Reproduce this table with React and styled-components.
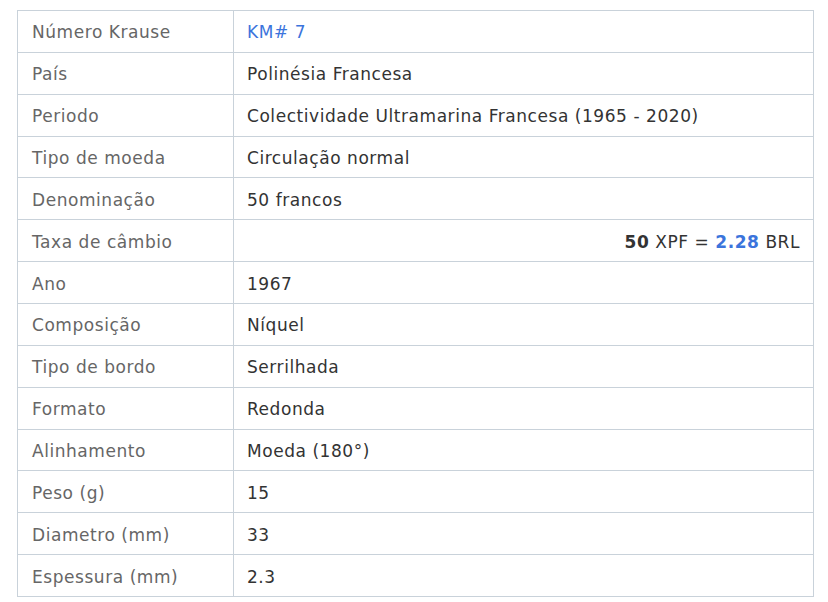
import React from "react";
import styled, { createGlobalStyle } from "styled-components";

const Global = createGlobalStyle`
  html, body { margin: 0; padding: 0; background: #fff; }
  body { font-family: "DejaVu Sans", Verdana, sans-serif; }
`;

const Wrap = styled.div`
  padding: 10px 15px 0 17px;
`;

const Table = styled.table`
  width: 797px;
  border-collapse: collapse;
  table-layout: fixed;
  font-size: 17px;
  letter-spacing: 0.55px;
  border: 1px solid #c9d2da;
`;

const Row = styled.tr`
  height: 41.86px;
`;

const Label = styled.td`
  width: 187px;
  padding: 2px 14px 0;
  color: #666;
  border: 1px solid #c9d2da;
  vertical-align: middle;
`;

const Value = styled.td`
  padding: 2px 13px 0;
  color: #333;
  border: 1px solid #c9d2da;
  vertical-align: middle;
  text-align: ${(p) => (p.$right ? "right" : "left")};
`;

const Link = styled.a`
  color: #3b74dc;
  text-decoration: none;
`;

const Strong = styled.b`
  color: ${(p) => (p.$blue ? "#3b74dc" : "#333")};
`;

const rows = [
  ["Número Krause", <Link href="#">KM# 7</Link>],
  ["País", "Polinésia Francesa"],
  ["Periodo", "Colectividade Ultramarina Francesa (1965 - 2020)"],
  ["Tipo de moeda", "Circulação normal"],
  ["Denominação", "50 francos"],
  [
    "Taxa de câmbio",
    <>
      <Strong>50</Strong> XPF = <Strong $blue>2.28</Strong> BRL
    </>,
    true,
  ],
  ["Ano", "1967"],
  ["Composição", "Níquel"],
  ["Tipo de bordo", "Serrilhada"],
  ["Formato", "Redonda"],
  ["Alinhamento", "Moeda (180°)"],
  ["Peso (g)", "15"],
  ["Diametro (mm)", "33"],
  ["Espessura (mm)", "2.3"],
];

export default function App() {
  return (
    <>
      <Global />
      <Wrap>
        <Table>
          <tbody>
            {rows.map(([l, v, r], i) => (
              <Row key={i}>
                <Label>{l}</Label>
                <Value $right={r}>{v}</Value>
              </Row>
            ))}
          </tbody>
        </Table>
      </Wrap>
    </>
  );
}
